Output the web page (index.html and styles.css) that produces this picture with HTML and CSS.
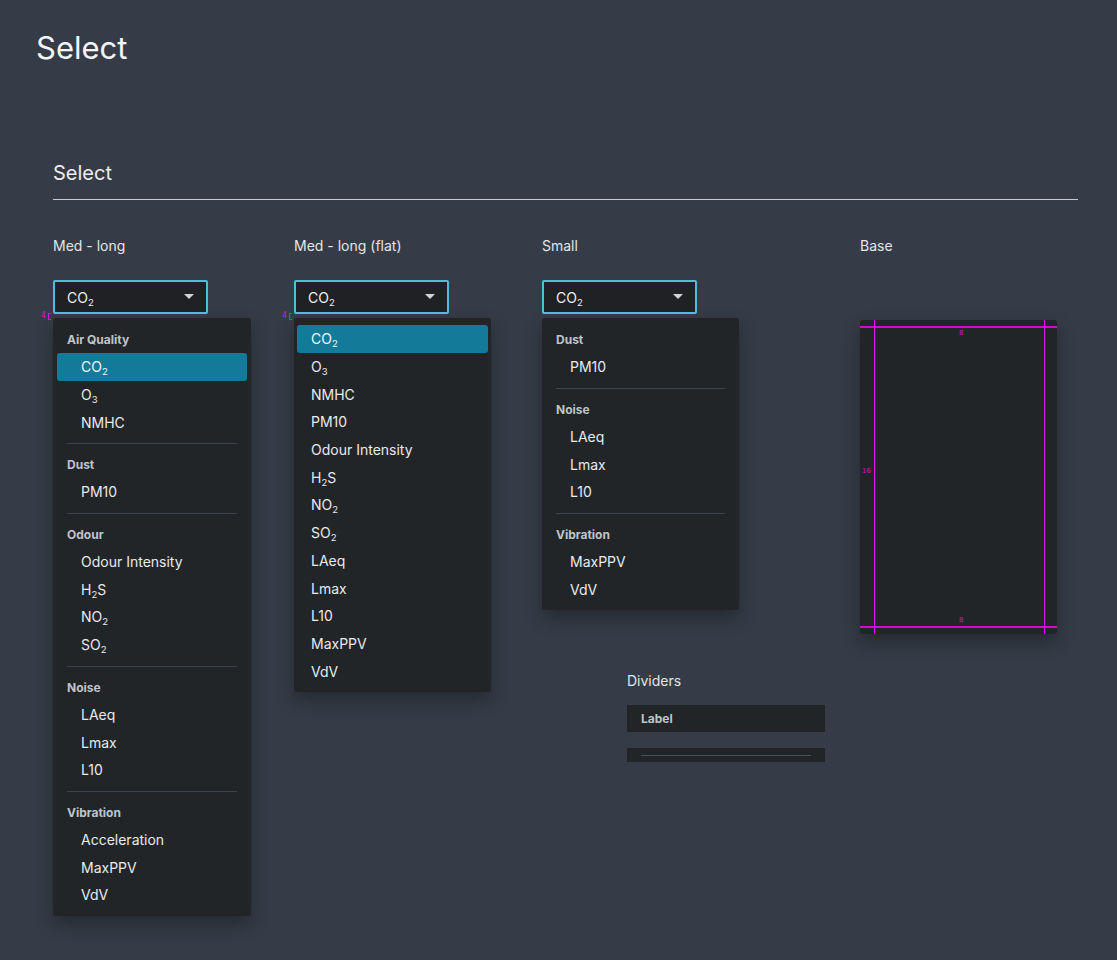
FILE: index.html
```html
<!DOCTYPE html>
<html lang="en">
<head>
<meta charset="utf-8">
<title>Select</title>
<link rel="stylesheet" href="styles.css">
</head>
<body>
<div class="page">
  <h1 class="title">Select</h1>
  <section class="section">
    <h2 class="section-head">Select</h2>
    <div class="cols">
      <!-- Column 1 -->
      <div class="col col-1">
        <div class="label">Med - long</div>
        <div class="select-wrap">
          <span class="spec-mark">4<span class="bracket"></span></span>
          <div class="select"><span>CO<span class="sub">2</span></span><span class="caret"></span></div>
        </div>
        <div class="menu">
          <div class="group-head">Air Quality</div>
          <div class="item sel"><span>CO<span class="sub">2</span></span></div>
          <div class="item"><span>O<span class="sub">3</span></span></div>
          <div class="item"><span>NMHC</span></div>
          <div class="divider"></div>
          <div class="group-head">Dust</div>
          <div class="item"><span>PM10</span></div>
          <div class="divider"></div>
          <div class="group-head">Odour</div>
          <div class="item"><span>Odour Intensity</span></div>
          <div class="item"><span>H<span class="sub">2</span>S</span></div>
          <div class="item"><span>NO<span class="sub">2</span></span></div>
          <div class="item"><span>SO<span class="sub">2</span></span></div>
          <div class="divider"></div>
          <div class="group-head">Noise</div>
          <div class="item"><span>LAeq</span></div>
          <div class="item"><span>Lmax</span></div>
          <div class="item"><span>L10</span></div>
          <div class="divider"></div>
          <div class="group-head">Vibration</div>
          <div class="item"><span>Acceleration</span></div>
          <div class="item"><span>MaxPPV</span></div>
          <div class="item"><span>VdV</span></div>
        </div>
      </div>

      <!-- Column 2 -->
      <div class="col col-2">
        <div class="label">Med - long (flat)</div>
        <div class="select-wrap">
          <span class="spec-mark">4<span class="bracket"></span></span>
          <div class="select"><span>CO<span class="sub">2</span></span><span class="caret"></span></div>
        </div>
        <div class="menu flat">
          <div class="item sel"><span>CO<span class="sub">2</span></span></div>
          <div class="item"><span>O<span class="sub">3</span></span></div>
          <div class="item"><span>NMHC</span></div>
          <div class="item"><span>PM10</span></div>
          <div class="item"><span>Odour Intensity</span></div>
          <div class="item"><span>H<span class="sub">2</span>S</span></div>
          <div class="item"><span>NO<span class="sub">2</span></span></div>
          <div class="item"><span>SO<span class="sub">2</span></span></div>
          <div class="item"><span>LAeq</span></div>
          <div class="item"><span>Lmax</span></div>
          <div class="item"><span>L10</span></div>
          <div class="item"><span>MaxPPV</span></div>
          <div class="item"><span>VdV</span></div>
        </div>
      </div>

      <!-- Column 3 -->
      <div class="col col-3">
        <div class="label">Small</div>
        <div class="select-wrap">
          <div class="select"><span>CO<span class="sub">2</span></span><span class="caret"></span></div>
        </div>
        <div class="menu">
          <div class="group-head">Dust</div>
          <div class="item"><span>PM10</span></div>
          <div class="divider"></div>
          <div class="group-head">Noise</div>
          <div class="item"><span>LAeq</span></div>
          <div class="item"><span>Lmax</span></div>
          <div class="item"><span>L10</span></div>
          <div class="divider"></div>
          <div class="group-head">Vibration</div>
          <div class="item"><span>MaxPPV</span></div>
          <div class="item"><span>VdV</span></div>
        </div>

        <div class="dividers">
          <div class="label">Dividers</div>
          <div class="div-label">Label</div>
          <div class="div-line"><span></span></div>
        </div>
      </div>

      <!-- Column 4 -->
      <div class="col col-4">
        <div class="label">Base</div>
        <div class="base">
          <span class="guide h top"></span>
          <span class="guide h bottom"></span>
          <span class="guide v left"></span>
          <span class="guide v right"></span>
          <span class="num n-top">8</span>
          <span class="num n-bottom">8</span>
          <span class="num n-left">16</span>
        </div>
      </div>
    </div>
  </section>
</div>
</body>
</html>
```

FILE: styles.css
```css
* { box-sizing: border-box; }

html, body {
  margin: 0;
  padding: 0;
  background: #353c47;
}

body {
  font-family: Inter, "Noto Sans", "Liberation Sans", sans-serif;
  color: #e6e8ea;
  width: 1117px;
  min-height: 960px;
}

.page {
  padding: 28px 0 0 36px;
}

.title {
  margin: 0;
  font-size: 31px;
  line-height: 40px;
  font-weight: 400;
  color: #f4f5f6;
}

.section {
  margin: 93px 0 0 17px;
  width: 1025px;
}

.section-head {
  margin: 0;
  font-size: 20px;
  line-height: 24px;
  font-weight: 400;
  color: #eceef0;
  padding-bottom: 14px;
  border-bottom: 1px solid #c6cacf;
}

.cols {
  display: grid;
  grid-template-columns: 241px 248px 318px 1fr;
  margin-top: 36px;
}

.label {
  font-size: 14px;
  line-height: 20px;
  color: #e3e5e8;
}

.select-wrap {
  position: relative;
  margin-top: 24px;
}

.select {
  width: 155px;
  height: 34px;
  border: 2px solid #4ebfdb;
  border-radius: 2px;
  background: #1f2124;
  display: flex;
  align-items: center;
  justify-content: space-between;
  padding: 0 12px 0 12px;
  font-size: 14px;
  color: #eef0f2;
}

.caret {
  width: 0;
  height: 0;
  border-left: 5px solid transparent;
  border-right: 5px solid transparent;
  border-top: 5px solid #cfd2d6;
  margin-top: -1px;
}

.sub {
  font-size: 9.5px;
  vertical-align: -3px;
  line-height: 0;
}

.spec-mark {
  position: absolute;
  left: -12px;
  top: 32px;
  font-family: "DejaVu Sans Mono", monospace;
  font-size: 8px;
  line-height: 8px;
  color: #d21ad2;
  display: flex;
  align-items: center;
  gap: 2px;
}

.bracket {
  display: inline-block;
  width: 3px;
  height: 7px;
  border: 1px solid #d21ad2;
  border-right: none;
}

.menu {
  margin-top: 4px;
  width: 198px;
  background: #222528;
  border-radius: 3px;
  box-shadow: 0 8px 18px rgba(0, 0, 0, 0.32);
  padding: 14px 4px 7px 4px;
}

.menu.flat {
  width: 197px;
  padding: 7px 3px 7px 3px;
}

.col-3 .menu {
  width: 197px;
}

.group-head {
  font-size: 12px;
  line-height: 16px;
  font-weight: 700;
  color: #c0c4c9;
  padding-left: 10px;
  margin-bottom: 5px;
}

.item {
  height: 27.7px;
  display: flex;
  align-items: center;
  padding-left: 24px;
  font-size: 14px;
  color: #e8eaec;
  border-radius: 3px;
}

.flat .item {
  padding-left: 14px;
}

.item.sel {
  background: #137a99;
  color: #f2f6f8;
}

.divider {
  height: 1px;
  background: #3d434b;
  margin: 7px 10px 13px 10px;
}

.dividers {
  margin: 61px 0 0 85px;
}

.div-label {
  margin-top: 14px;
  width: 198px;
  height: 27px;
  background: #222528;
  font-size: 12px;
  font-weight: 700;
  color: #c0c4c9;
  display: flex;
  align-items: center;
  padding-left: 14px;
}

.div-line {
  margin-top: 16px;
  width: 198px;
  height: 14px;
  background: #222528;
  display: flex;
  align-items: center;
  padding: 0 14px;
}

.div-line span {
  display: block;
  height: 1px;
  width: 100%;
  background: #4a5058;
}

.base {
  position: relative;
  margin-top: 64px;
  width: 197px;
  height: 314px;
  background: #222528;
  border-radius: 3px;
  box-shadow: 0 8px 18px rgba(0, 0, 0, 0.32);
}

.guide {
  position: absolute;
  background: #e414e4;
}

.guide.h {
  left: 0;
  right: 0;
  height: 2px;
  background: #c810c8;
}

.guide.top { top: 6px; }
.guide.bottom { top: 306px; }

.guide.v {
  top: 0;
  bottom: 0;
  width: 1px;
}

.guide.left { left: 14px; }
.guide.right { left: 184px; }

.num {
  position: absolute;
  font-family: "DejaVu Sans", sans-serif;
  font-size: 7px;
  line-height: 7px;
  color: #c41ec4;
}

.n-top { left: 99px; top: 10px; }
.n-bottom { left: 99px; top: 297px; }
.n-left { left: 2px; top: 148px; }
```
